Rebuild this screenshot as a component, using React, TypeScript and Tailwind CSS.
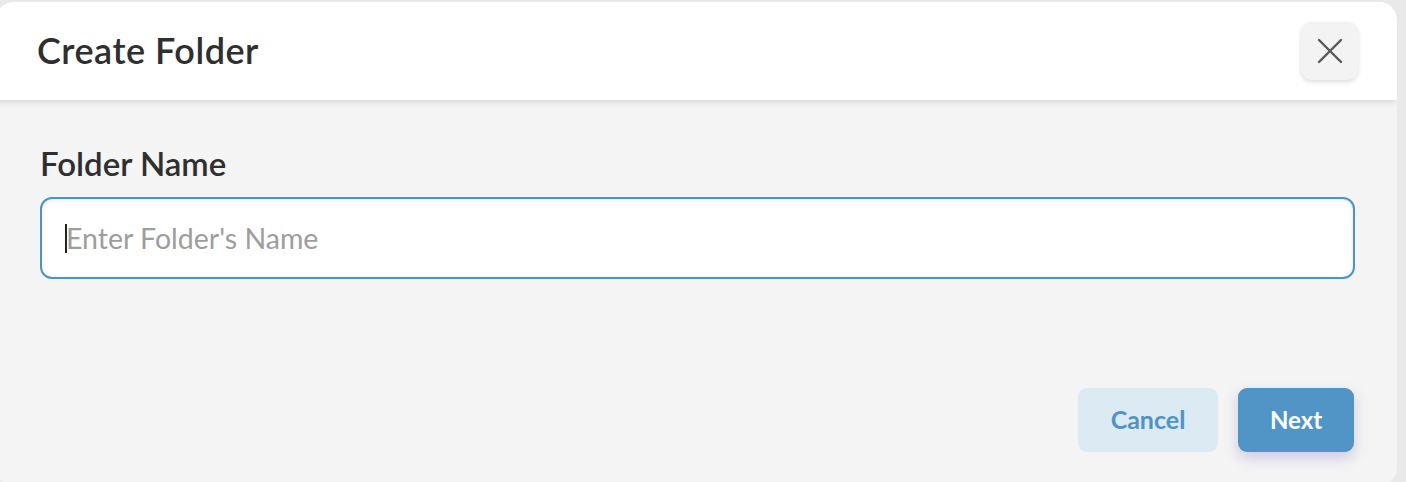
export default function App() {
  return (
    <div className="h-[482px] w-[1406px] overflow-hidden bg-[#e9e9e9] pt-[2px] font-['Lato',sans-serif]">
      <div className="-ml-[4px] flex h-[484px] w-[1401px] flex-col overflow-hidden rounded-[18px] bg-[#f4f4f4]">
        <header className="relative z-10 flex h-[98px] shrink-0 items-center justify-between bg-white pl-[41px] pr-[39px] shadow-[0_2px_6px_rgba(0,0,0,0.12)]">
          <h1 className="pb-[2px] text-[36px] font-semibold tracking-[0.5px] text-[#2f2f2f]">Create Folder</h1>
          <button className="flex h-[58px] w-[57px] items-center justify-center rounded-[11px] bg-[#f3f3f3] text-[#575757] shadow-[0_2px_5px_rgba(0,0,0,0.14)]">
            <svg width="26" height="26" viewBox="0 0 26 26" fill="none" stroke="currentColor" strokeWidth="2.4" strokeLinecap="round">
              <path d="M2 2 L24 24 M24 2 L2 24" />
            </svg>
          </button>
        </header>

        <div className="flex flex-1 flex-col pl-[44px] pr-[42px] pt-[47px]">
          <label className="text-[33px] font-semibold leading-none text-[#2f2f2f]">Folder Name</label>
          <div className="relative mt-[17px]">
            <input
              placeholder="Enter Folder's Name"
              className="h-[82px] w-full rounded-[12px] border-2 border-[#4d93c4] bg-white px-[24px] text-[28.5px] text-[#333] shadow-[inset_0_1px_4px_rgba(0,0,0,0.1)] outline-none placeholder:text-[#9d9d9d]"
            />
            <span className="pointer-events-none absolute left-[25px] top-[27px] h-[29px] w-[2px] bg-[#222]" />
          </div>
          <div className="mr-px mt-[109px] flex justify-end gap-[20px]">
            <button className="h-[64px] w-[140px] rounded-[9px] bg-[#dceaf4] text-[25px] font-bold text-[#4f94c4]">
              Cancel
            </button>
            <button className="h-[64px] w-[116px] rounded-[9px] bg-[#5095c5] text-[24px] font-bold text-white shadow-[0_6px_14px_rgba(90,80,170,0.25)]">
              Next
            </button>
          </div>
        </div>
      </div>
    </div>
  );
}
